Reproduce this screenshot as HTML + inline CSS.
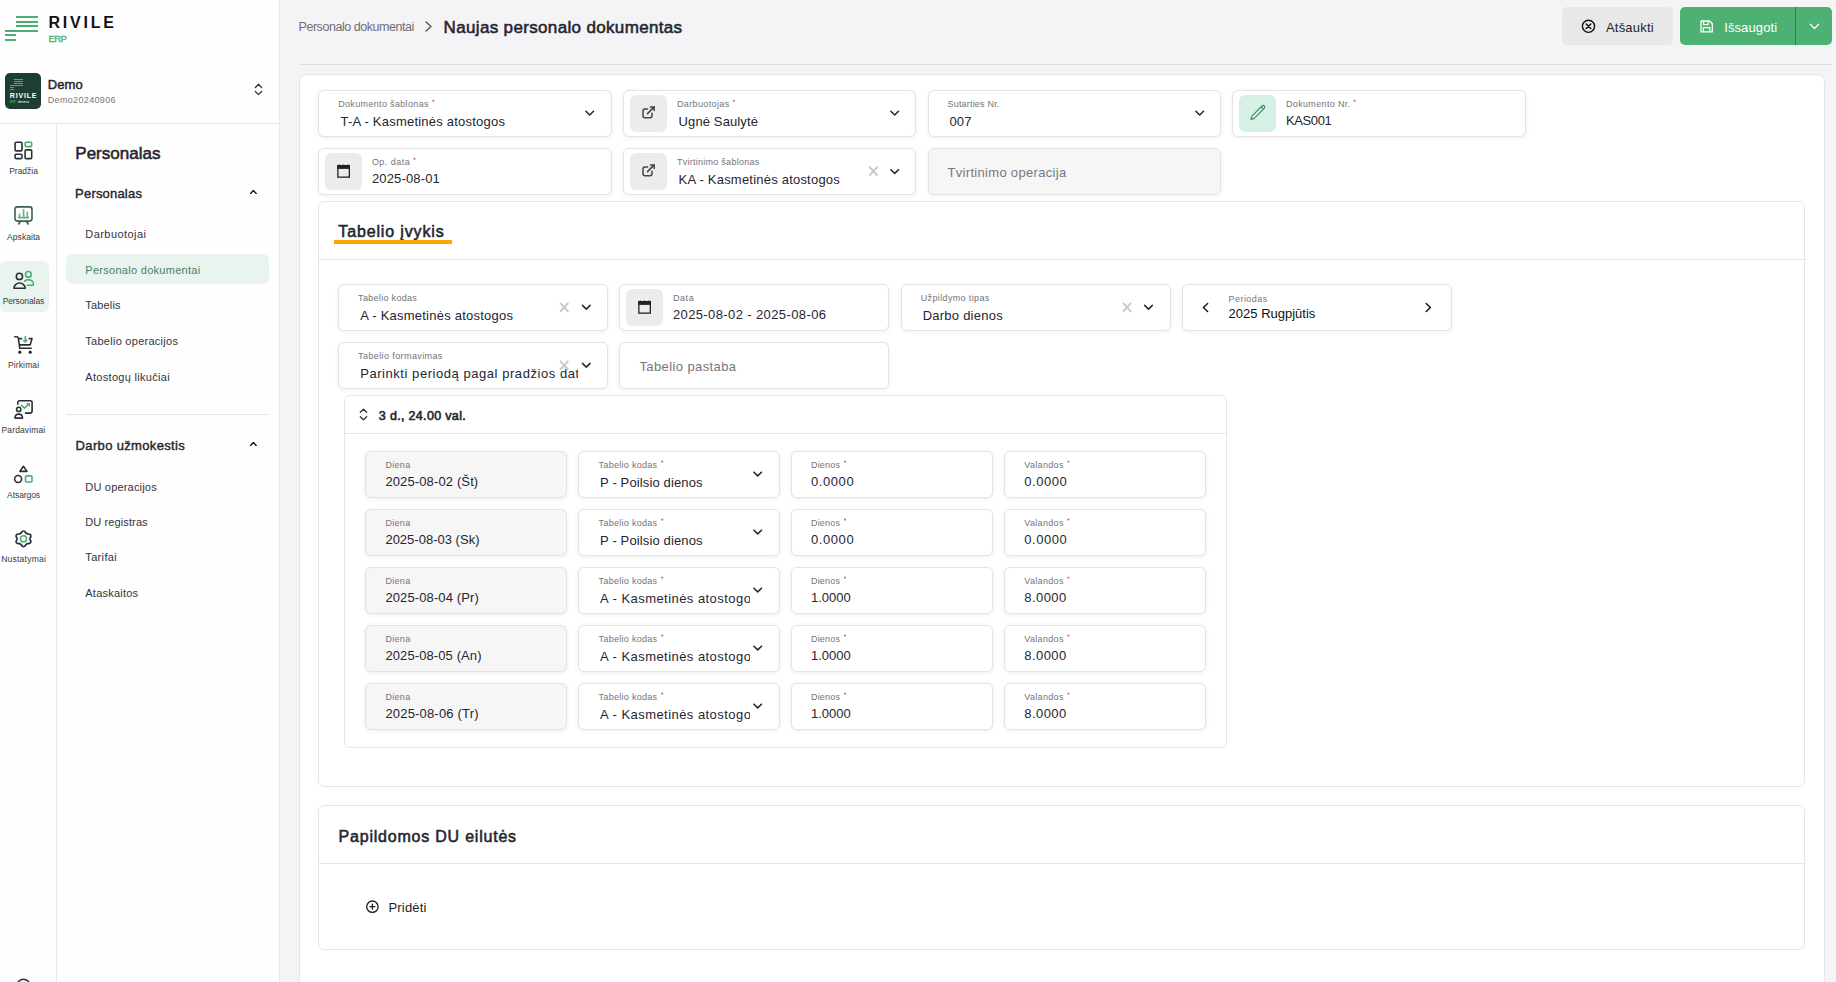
<!DOCTYPE html>
<html><head><meta charset="utf-8"><style>
html,body{margin:0;padding:0;}
body{width:1836px;height:982px;overflow:hidden;position:relative;background:#f4f4f6;font-family:"Liberation Sans",sans-serif;}
.a{position:absolute;}
.t{position:absolute;white-space:nowrap;}
svg.ov{position:absolute;left:0;top:0;width:1836px;height:982px;pointer-events:none;}
</style></head><body>
<div class="a" style="left:0px;top:0px;width:279px;height:982px;background:#fefefe;"></div>
<div class="a" style="left:279px;top:0px;width:1px;height:982px;background:#e8e8ea;"></div>
<div class="a" style="left:0px;top:123px;width:279px;height:1px;background:#e8e8e8;"></div>
<div class="a" style="left:56px;top:124px;width:1px;height:858px;background:#e8e8e8;"></div>
<div class="a" style="left:16px;top:16px;width:22px;height:2.2px;background:#4caf72;"></div>
<div class="a" style="left:16px;top:20.8px;width:22px;height:2.2px;background:#4caf72;"></div>
<div class="a" style="left:16px;top:25.2px;width:22px;height:2.2px;background:#4caf72;"></div>
<div class="a" style="left:5px;top:29.9px;width:33px;height:2.2px;background:#4caf72;"></div>
<div class="a" style="left:5px;top:34.3px;width:11px;height:2.2px;background:#4caf72;"></div>
<div class="a" style="left:5px;top:39px;width:11px;height:2.2px;background:#4caf72;"></div>
<div class="t" style="left:48.40px;top:9.50px;font-size:16px;line-height:26px;height:26px;color:#111;letter-spacing:2.810px;font-weight:700;">RIVILE</div>
<div class="t" style="left:48.60px;top:30.50px;font-size:9.5px;line-height:15px;height:15px;color:#4caf72;letter-spacing:-0.675px;-webkit-text-stroke:0.35px #4caf72;">ERP</div>
<div class="a" style="left:5px;top:73px;width:36px;height:36px;background:#1d3f31;border-radius:5px;"></div>
<div class="a" style="left:14px;top:78.5px;width:9px;height:1px;background:#4caf72;"></div>
<div class="a" style="left:14px;top:80.5px;width:9px;height:1px;background:#4caf72;"></div>
<div class="a" style="left:14px;top:82.5px;width:9px;height:1px;background:#4caf72;"></div>
<div class="a" style="left:10px;top:84.5px;width:13px;height:1px;background:#4caf72;"></div>
<div class="a" style="left:10px;top:86.5px;width:4px;height:1px;background:#4caf72;"></div>
<div class="a" style="left:10px;top:88.5px;width:4px;height:1px;background:#4caf72;"></div>
<div class="t" style="left:9.80px;top:89.50px;font-size:7px;line-height:11px;height:11px;color:#ffffff;letter-spacing:0.830px;font-weight:700;">RIVILE</div>
<div class="t" style="left:9.80px;top:98.50px;font-size:4px;line-height:6px;height:6px;color:#4caf72;letter-spacing:-0.775px;">ERP</div>
<div class="t" style="left:18.00px;top:98.50px;font-size:4px;line-height:6px;height:6px;color:#ffffff;letter-spacing:0.333px;">demo</div>
<div class="t" style="left:47.70px;top:74.00px;font-size:13px;line-height:21px;height:21px;color:#25252f;letter-spacing:0.100px;-webkit-text-stroke:0.45px #25252f;">Demo</div>
<div class="t" style="left:47.70px;top:92.70px;font-size:9px;line-height:14px;height:14px;color:#77777d;letter-spacing:0.350px;">Demo20240906</div>
<div class="a" style="left:0px;top:261px;width:49px;height:51px;background:#eaf4ef;border-radius:6px;"></div>
<div class="t" style="left:9.20px;top:164.00px;font-size:8.5px;line-height:14px;height:14px;color:#3a3a44;letter-spacing:-0.025px;">Pradžia</div>
<div class="t" style="left:7.10px;top:230.00px;font-size:8.5px;line-height:14px;height:14px;color:#3a3a44;letter-spacing:0.057px;">Apskaita</div>
<div class="t" style="left:2.70px;top:294.00px;font-size:8.5px;line-height:14px;height:14px;color:#3a3a44;letter-spacing:-0.106px;">Personalas</div>
<div class="t" style="left:7.90px;top:358.00px;font-size:8.5px;line-height:14px;height:14px;color:#3a3a44;letter-spacing:0.143px;">Pirkimai</div>
<div class="t" style="left:1.50px;top:423.00px;font-size:8.5px;line-height:14px;height:14px;color:#3a3a44;letter-spacing:0.133px;">Pardavimai</div>
<div class="t" style="left:7.10px;top:488.00px;font-size:8.5px;line-height:14px;height:14px;color:#3a3a44;letter-spacing:-0.079px;">Atsargos</div>
<div class="t" style="left:1.20px;top:552.00px;font-size:8.5px;line-height:14px;height:14px;color:#3a3a44;letter-spacing:0.233px;">Nustatymai</div>
<div class="t" style="left:75.30px;top:140.00px;font-size:17px;line-height:27px;height:27px;color:#25252f;letter-spacing:0.017px;-webkit-text-stroke:0.55px #25252f;">Personalas</div>
<div class="t" style="left:75.10px;top:182.50px;font-size:13px;line-height:21px;height:21px;color:#25252f;letter-spacing:0.194px;-webkit-text-stroke:0.4px #25252f;">Personalas</div>
<div class="a" style="left:66px;top:254px;width:203px;height:30px;background:#eaf4ef;border-radius:6px;"></div>
<div class="t" style="left:85.30px;top:224.80px;font-size:11px;line-height:18px;height:18px;color:#33333d;letter-spacing:0.445px;">Darbuotojai</div>
<div class="t" style="left:85.30px;top:261.20px;font-size:11px;line-height:18px;height:18px;color:#4b7d66;letter-spacing:0.287px;">Personalo dokumentai</div>
<div class="t" style="left:85.30px;top:296.00px;font-size:11px;line-height:18px;height:18px;color:#33333d;letter-spacing:0.158px;">Tabelis</div>
<div class="t" style="left:85.30px;top:332.00px;font-size:11px;line-height:18px;height:18px;color:#33333d;letter-spacing:0.268px;">Tabelio operacijos</div>
<div class="t" style="left:85.30px;top:367.80px;font-size:11px;line-height:18px;height:18px;color:#33333d;letter-spacing:0.306px;">Atostogų likučiai</div>
<div class="a" style="left:66px;top:414px;width:203px;height:1px;background:#e6e6e6;"></div>
<div class="t" style="left:75.60px;top:434.50px;font-size:13px;line-height:21px;height:21px;color:#25252f;letter-spacing:0.343px;-webkit-text-stroke:0.4px #25252f;">Darbo užmokestis</div>
<div class="t" style="left:85.30px;top:477.60px;font-size:11px;line-height:18px;height:18px;color:#33333d;letter-spacing:0.192px;">DU operacijos</div>
<div class="t" style="left:85.30px;top:513.00px;font-size:11px;line-height:18px;height:18px;color:#33333d;letter-spacing:0.109px;">DU registras</div>
<div class="t" style="left:85.30px;top:548.20px;font-size:11px;line-height:18px;height:18px;color:#33333d;letter-spacing:0.342px;">Tarifai</div>
<div class="t" style="left:85.30px;top:584.00px;font-size:11px;line-height:18px;height:18px;color:#33333d;letter-spacing:0.228px;">Ataskaitos</div>
<div class="t" style="left:298.50px;top:16.50px;font-size:12.5px;line-height:20px;height:20px;color:#6e6e76;letter-spacing:-0.447px;">Personalo dokumentai</div>
<div class="t" style="left:443.60px;top:14.00px;font-size:17px;line-height:27px;height:27px;color:#25252f;letter-spacing:0.340px;-webkit-text-stroke:0.55px #25252f;">Naujas personalo dokumentas</div>
<div class="a" style="left:299px;top:64px;width:1533px;height:1px;background:#dedee0;"></div>
<div class="a" style="left:1562px;top:7px;width:111px;height:38px;background:#e8e8e9;border-radius:5px;"></div>
<div class="t" style="left:1606.00px;top:17.00px;font-size:13px;line-height:21px;height:21px;color:#1f1f29;letter-spacing:0.193px;">Atšaukti</div>
<div class="a" style="left:1680px;top:7px;width:152px;height:38px;background:#4db174;border-radius:5px;"></div>
<div class="a" style="left:1795px;top:7px;width:1px;height:38px;background:#357a52;"></div>
<div class="t" style="left:1724.20px;top:17.00px;font-size:13px;line-height:21px;height:21px;color:#ffffff;letter-spacing:0.106px;">Išsaugoti</div>
<div class="a" style="left:299px;top:74px;width:1526px;height:940px;background:#ffffff;border:1px solid #e6e6e8;box-sizing:border-box;border-radius:8px;"></div>
<div class="a" style="left:318px;top:90px;width:294px;height:47px;background:#fff;border:1px solid #e3e3e3;box-sizing:border-box;border-radius:6px;box-shadow:0 1px 4px rgba(0,0,0,0.075);"></div>
<div class="t" style="left:338.20px;top:97.10px;font-size:9px;line-height:14px;height:14px;color:#74747a;letter-spacing:0.338px;">Dokumento šablonas</div>
<div class="t" style="left:340.50px;top:111.30px;font-size:13px;line-height:21px;height:21px;color:#25252f;letter-spacing:0.218px;">T-A - Kasmetinės atostogos</div>
<div class="a" style="left:623px;top:90px;width:293px;height:47px;background:#fff;border:1px solid #e3e3e3;box-sizing:border-box;border-radius:6px;box-shadow:0 1px 4px rgba(0,0,0,0.075);"></div>
<div class="a" style="left:630px;top:95px;width:37px;height:37px;background:#ececec;border-radius:6px;"></div>
<div class="t" style="left:676.90px;top:97.10px;font-size:9px;line-height:14px;height:14px;color:#74747a;letter-spacing:0.375px;">Darbuotojas</div>
<div class="t" style="left:678.60px;top:111.30px;font-size:13px;line-height:21px;height:21px;color:#25252f;letter-spacing:0.114px;">Ugnė Saulytė</div>
<div class="a" style="left:928px;top:90px;width:293px;height:47px;background:#fff;border:1px solid #e3e3e3;box-sizing:border-box;border-radius:6px;box-shadow:0 1px 4px rgba(0,0,0,0.075);"></div>
<div class="t" style="left:947.50px;top:97.10px;font-size:9px;line-height:14px;height:14px;color:#74747a;letter-spacing:0.192px;">Sutarties Nr.</div>
<div class="t" style="left:949.60px;top:111.30px;font-size:13px;line-height:21px;height:21px;color:#25252f;letter-spacing:0.050px;">007</div>
<div class="a" style="left:1232px;top:90px;width:294px;height:47px;background:#fff;border:1px solid #e3e3e3;box-sizing:border-box;border-radius:6px;box-shadow:0 1px 4px rgba(0,0,0,0.075);"></div>
<div class="a" style="left:1239px;top:95px;width:37px;height:37px;background:#d7f0e5;border-radius:6px;"></div>
<div class="t" style="left:1286.00px;top:97.10px;font-size:9px;line-height:14px;height:14px;color:#74747a;letter-spacing:0.337px;">Dokumento Nr.</div>
<div class="t" style="left:1286.00px;top:110.30px;font-size:13px;line-height:21px;height:21px;color:#25252f;letter-spacing:-0.400px;">KAS001</div>
<div class="a" style="left:318px;top:148px;width:294px;height:47px;background:#fff;border:1px solid #e3e3e3;box-sizing:border-box;border-radius:6px;box-shadow:0 1px 4px rgba(0,0,0,0.075);"></div>
<div class="a" style="left:325px;top:153px;width:37px;height:37px;background:#ececec;border-radius:6px;"></div>
<div class="t" style="left:371.90px;top:155.20px;font-size:9px;line-height:14px;height:14px;color:#74747a;letter-spacing:0.464px;">Op. data</div>
<div class="t" style="left:371.90px;top:168.00px;font-size:13px;line-height:21px;height:21px;color:#25252f;letter-spacing:0.156px;">2025-08-01</div>
<div class="a" style="left:623px;top:148px;width:293px;height:47px;background:#fff;border:1px solid #e3e3e3;box-sizing:border-box;border-radius:6px;box-shadow:0 1px 4px rgba(0,0,0,0.075);"></div>
<div class="a" style="left:630px;top:153px;width:37px;height:37px;background:#ececec;border-radius:6px;"></div>
<div class="t" style="left:676.90px;top:155.20px;font-size:9px;line-height:14px;height:14px;color:#74747a;letter-spacing:0.269px;">Tvirtinimo šablonas</div>
<div class="t" style="left:678.60px;top:169.30px;font-size:13px;line-height:21px;height:21px;color:#25252f;letter-spacing:0.212px;">KA - Kasmetinės atostogos</div>
<div class="a" style="left:928px;top:148px;width:293px;height:47px;background:#f6f6f6;border:1px solid #e3e3e3;box-sizing:border-box;border-radius:6px;box-shadow:0 1px 4px rgba(0,0,0,0.075);"></div>
<div class="t" style="left:947.50px;top:162.00px;font-size:13px;line-height:21px;height:21px;color:#76767c;letter-spacing:0.311px;">Tvirtinimo operacija</div>
<div class="a" style="left:318px;top:201px;width:1487px;height:586px;background:#fff;border:1px solid #e6e6e8;box-sizing:border-box;border-radius:6px;"></div>
<div class="a" style="left:318px;top:259px;width:1487px;height:1px;background:#e6e6e8;"></div>
<div class="t" style="left:338.30px;top:218.50px;font-size:16px;line-height:26px;height:26px;color:#25252f;letter-spacing:0.858px;-webkit-text-stroke:0.55px #25252f;">Tabelio įvykis</div>
<div class="a" style="left:333.5px;top:240px;width:118.5px;height:4px;background:#ffa502;"></div>
<div class="a" style="left:338px;top:284px;width:270px;height:47px;background:#fff;border:1px solid #e3e3e3;box-sizing:border-box;border-radius:6px;box-shadow:0 1px 4px rgba(0,0,0,0.075);"></div>
<div class="t" style="left:358.10px;top:290.90px;font-size:9px;line-height:14px;height:14px;color:#74747a;letter-spacing:0.312px;">Tabelio kodas</div>
<div class="t" style="left:360.20px;top:305.20px;font-size:13px;line-height:21px;height:21px;color:#25252f;letter-spacing:0.235px;">A - Kasmetinės atostogos</div>
<div class="a" style="left:619px;top:284px;width:270px;height:47px;background:#fff;border:1px solid #e3e3e3;box-sizing:border-box;border-radius:6px;box-shadow:0 1px 4px rgba(0,0,0,0.075);"></div>
<div class="a" style="left:626px;top:289px;width:37px;height:37px;background:#ececec;border-radius:6px;"></div>
<div class="t" style="left:672.90px;top:291.20px;font-size:9px;line-height:14px;height:14px;color:#74747a;letter-spacing:0.583px;">Data</div>
<div class="t" style="left:672.90px;top:303.80px;font-size:13px;line-height:21px;height:21px;color:#25252f;letter-spacing:0.389px;">2025-08-02 - 2025-08-06</div>
<div class="a" style="left:901px;top:284px;width:270px;height:47px;background:#fff;border:1px solid #e3e3e3;box-sizing:border-box;border-radius:6px;box-shadow:0 1px 4px rgba(0,0,0,0.075);"></div>
<div class="t" style="left:920.70px;top:290.90px;font-size:9px;line-height:14px;height:14px;color:#74747a;letter-spacing:0.364px;">Užpildymo tipas</div>
<div class="t" style="left:922.70px;top:305.20px;font-size:13px;line-height:21px;height:21px;color:#25252f;letter-spacing:0.241px;">Darbo dienos</div>
<div class="a" style="left:1182px;top:284px;width:270px;height:47px;background:#fff;border:1px solid #e3e3e3;box-sizing:border-box;border-radius:6px;box-shadow:0 1px 4px rgba(0,0,0,0.075);"></div>
<div class="t" style="left:1228.50px;top:292.20px;font-size:9px;line-height:14px;height:14px;color:#74747a;letter-spacing:0.457px;">Periodas</div>
<div class="t" style="left:1228.60px;top:303.00px;font-size:13px;line-height:21px;height:21px;color:#111;letter-spacing:0.000px;">2025 Rugpjūtis</div>
<div class="a" style="left:338px;top:342px;width:270px;height:47px;background:#fff;border:1px solid #e3e3e3;box-sizing:border-box;border-radius:6px;box-shadow:0 1px 4px rgba(0,0,0,0.075);"></div>
<div class="t" style="left:358.10px;top:348.90px;font-size:9px;line-height:14px;height:14px;color:#74747a;letter-spacing:0.397px;">Tabelio formavimas</div>
<div class="t" style="left:360.20px;top:362.70px;font-size:13px;line-height:21px;height:21px;color:#25252f;letter-spacing:0.550px;width:217.80px;overflow:hidden;">Parinkti periodą pagal pradžios datą</div>
<div class="a" style="left:619px;top:342px;width:270px;height:47px;background:#fff;border:1px solid #e3e3e3;box-sizing:border-box;border-radius:6px;box-shadow:0 1px 4px rgba(0,0,0,0.075);"></div>
<div class="t" style="left:639.40px;top:356.10px;font-size:13px;line-height:21px;height:21px;color:#76767c;letter-spacing:0.400px;">Tabelio pastaba</div>
<div class="a" style="left:344px;top:395px;width:883px;height:353px;background:#fff;border:1px solid #e6e6e8;box-sizing:border-box;border-radius:6px;"></div>
<div class="a" style="left:344px;top:433px;width:883px;height:1px;background:#e6e6e8;"></div>
<div class="t" style="left:378.80px;top:406.00px;font-size:12.5px;line-height:20px;height:20px;color:#25252f;letter-spacing:0.327px;-webkit-text-stroke:0.6px #25252f;">3 d., 24.00 val.</div>
<div class="a" style="left:365px;top:451px;width:202px;height:47px;background:#f6f6f6;border:1px solid #e3e3e3;box-sizing:border-box;border-radius:6px;box-shadow:0 1px 4px rgba(0,0,0,0.075);"></div>
<div class="t" style="left:385.40px;top:458.20px;font-size:9px;line-height:14px;height:14px;color:#74747a;letter-spacing:0.313px;">Diena</div>
<div class="t" style="left:385.40px;top:471.20px;font-size:13px;line-height:21px;height:21px;color:#25252f;letter-spacing:0.125px;">2025-08-02 (Št)</div>
<div class="a" style="left:578px;top:451px;width:202px;height:47px;background:#fff;border:1px solid #e3e3e3;box-sizing:border-box;border-radius:6px;box-shadow:0 1px 4px rgba(0,0,0,0.075);"></div>
<div class="t" style="left:598.60px;top:458.20px;font-size:9px;line-height:14px;height:14px;color:#74747a;letter-spacing:0.288px;">Tabelio kodas</div>
<div class="t" style="left:600.10px;top:471.70px;font-size:13px;line-height:21px;height:21px;color:#25252f;letter-spacing:0.129px;">P - Poilsio dienos</div>
<div class="a" style="left:791px;top:451px;width:202px;height:47px;background:#fff;border:1px solid #e3e3e3;box-sizing:border-box;border-radius:6px;box-shadow:0 1px 4px rgba(0,0,0,0.075);"></div>
<div class="t" style="left:811.00px;top:458.20px;font-size:9px;line-height:14px;height:14px;color:#74747a;letter-spacing:0.180px;">Dienos</div>
<div class="t" style="left:811.00px;top:471.20px;font-size:13px;line-height:21px;height:21px;color:#25252f;letter-spacing:0.570px;">0.0000</div>
<div class="a" style="left:1004px;top:451px;width:202px;height:47px;background:#fff;border:1px solid #e3e3e3;box-sizing:border-box;border-radius:6px;box-shadow:0 1px 4px rgba(0,0,0,0.075);"></div>
<div class="t" style="left:1024.30px;top:458.20px;font-size:9px;line-height:14px;height:14px;color:#74747a;letter-spacing:0.321px;">Valandos</div>
<div class="t" style="left:1024.30px;top:471.20px;font-size:13px;line-height:21px;height:21px;color:#25252f;letter-spacing:0.530px;">0.0000</div>
<div class="a" style="left:365px;top:509px;width:202px;height:47px;background:#f6f6f6;border:1px solid #e3e3e3;box-sizing:border-box;border-radius:6px;box-shadow:0 1px 4px rgba(0,0,0,0.075);"></div>
<div class="t" style="left:385.40px;top:516.20px;font-size:9px;line-height:14px;height:14px;color:#74747a;letter-spacing:0.313px;">Diena</div>
<div class="t" style="left:385.40px;top:529.20px;font-size:13px;line-height:21px;height:21px;color:#25252f;letter-spacing:0.011px;">2025-08-03 (Sk)</div>
<div class="a" style="left:578px;top:509px;width:202px;height:47px;background:#fff;border:1px solid #e3e3e3;box-sizing:border-box;border-radius:6px;box-shadow:0 1px 4px rgba(0,0,0,0.075);"></div>
<div class="t" style="left:598.60px;top:516.20px;font-size:9px;line-height:14px;height:14px;color:#74747a;letter-spacing:0.288px;">Tabelio kodas</div>
<div class="t" style="left:600.10px;top:529.70px;font-size:13px;line-height:21px;height:21px;color:#25252f;letter-spacing:0.129px;">P - Poilsio dienos</div>
<div class="a" style="left:791px;top:509px;width:202px;height:47px;background:#fff;border:1px solid #e3e3e3;box-sizing:border-box;border-radius:6px;box-shadow:0 1px 4px rgba(0,0,0,0.075);"></div>
<div class="t" style="left:811.00px;top:516.20px;font-size:9px;line-height:14px;height:14px;color:#74747a;letter-spacing:0.180px;">Dienos</div>
<div class="t" style="left:811.00px;top:529.20px;font-size:13px;line-height:21px;height:21px;color:#25252f;letter-spacing:0.570px;">0.0000</div>
<div class="a" style="left:1004px;top:509px;width:202px;height:47px;background:#fff;border:1px solid #e3e3e3;box-sizing:border-box;border-radius:6px;box-shadow:0 1px 4px rgba(0,0,0,0.075);"></div>
<div class="t" style="left:1024.30px;top:516.20px;font-size:9px;line-height:14px;height:14px;color:#74747a;letter-spacing:0.321px;">Valandos</div>
<div class="t" style="left:1024.30px;top:529.20px;font-size:13px;line-height:21px;height:21px;color:#25252f;letter-spacing:0.530px;">0.0000</div>
<div class="a" style="left:365px;top:567px;width:202px;height:47px;background:#f6f6f6;border:1px solid #e3e3e3;box-sizing:border-box;border-radius:6px;box-shadow:0 1px 4px rgba(0,0,0,0.075);"></div>
<div class="t" style="left:385.40px;top:574.20px;font-size:9px;line-height:14px;height:14px;color:#74747a;letter-spacing:0.313px;">Diena</div>
<div class="t" style="left:385.40px;top:587.20px;font-size:13px;line-height:21px;height:21px;color:#25252f;letter-spacing:0.118px;">2025-08-04 (Pr)</div>
<div class="a" style="left:578px;top:567px;width:202px;height:47px;background:#fff;border:1px solid #e3e3e3;box-sizing:border-box;border-radius:6px;box-shadow:0 1px 4px rgba(0,0,0,0.075);"></div>
<div class="t" style="left:598.60px;top:574.20px;font-size:9px;line-height:14px;height:14px;color:#74747a;letter-spacing:0.288px;">Tabelio kodas</div>
<div class="t" style="left:600.10px;top:587.70px;font-size:13px;line-height:21px;height:21px;color:#25252f;letter-spacing:0.450px;width:149.90px;overflow:hidden;">A - Kasmetinės atostogos</div>
<div class="a" style="left:791px;top:567px;width:202px;height:47px;background:#fff;border:1px solid #e3e3e3;box-sizing:border-box;border-radius:6px;box-shadow:0 1px 4px rgba(0,0,0,0.075);"></div>
<div class="t" style="left:811.00px;top:574.20px;font-size:9px;line-height:14px;height:14px;color:#74747a;letter-spacing:0.180px;">Dienos</div>
<div class="t" style="left:811.00px;top:587.20px;font-size:13px;line-height:21px;height:21px;color:#25252f;letter-spacing:-0.030px;">1.0000</div>
<div class="a" style="left:1004px;top:567px;width:202px;height:47px;background:#fff;border:1px solid #e3e3e3;box-sizing:border-box;border-radius:6px;box-shadow:0 1px 4px rgba(0,0,0,0.075);"></div>
<div class="t" style="left:1024.30px;top:574.20px;font-size:9px;line-height:14px;height:14px;color:#74747a;letter-spacing:0.321px;">Valandos</div>
<div class="t" style="left:1024.30px;top:587.20px;font-size:13px;line-height:21px;height:21px;color:#25252f;letter-spacing:0.430px;">8.0000</div>
<div class="a" style="left:365px;top:625px;width:202px;height:47px;background:#f6f6f6;border:1px solid #e3e3e3;box-sizing:border-box;border-radius:6px;box-shadow:0 1px 4px rgba(0,0,0,0.075);"></div>
<div class="t" style="left:385.40px;top:632.20px;font-size:9px;line-height:14px;height:14px;color:#74747a;letter-spacing:0.313px;">Diena</div>
<div class="t" style="left:385.40px;top:645.20px;font-size:13px;line-height:21px;height:21px;color:#25252f;letter-spacing:0.104px;">2025-08-05 (An)</div>
<div class="a" style="left:578px;top:625px;width:202px;height:47px;background:#fff;border:1px solid #e3e3e3;box-sizing:border-box;border-radius:6px;box-shadow:0 1px 4px rgba(0,0,0,0.075);"></div>
<div class="t" style="left:598.60px;top:632.20px;font-size:9px;line-height:14px;height:14px;color:#74747a;letter-spacing:0.288px;">Tabelio kodas</div>
<div class="t" style="left:600.10px;top:645.70px;font-size:13px;line-height:21px;height:21px;color:#25252f;letter-spacing:0.450px;width:149.90px;overflow:hidden;">A - Kasmetinės atostogos</div>
<div class="a" style="left:791px;top:625px;width:202px;height:47px;background:#fff;border:1px solid #e3e3e3;box-sizing:border-box;border-radius:6px;box-shadow:0 1px 4px rgba(0,0,0,0.075);"></div>
<div class="t" style="left:811.00px;top:632.20px;font-size:9px;line-height:14px;height:14px;color:#74747a;letter-spacing:0.180px;">Dienos</div>
<div class="t" style="left:811.00px;top:645.20px;font-size:13px;line-height:21px;height:21px;color:#25252f;letter-spacing:-0.030px;">1.0000</div>
<div class="a" style="left:1004px;top:625px;width:202px;height:47px;background:#fff;border:1px solid #e3e3e3;box-sizing:border-box;border-radius:6px;box-shadow:0 1px 4px rgba(0,0,0,0.075);"></div>
<div class="t" style="left:1024.30px;top:632.20px;font-size:9px;line-height:14px;height:14px;color:#74747a;letter-spacing:0.321px;">Valandos</div>
<div class="t" style="left:1024.30px;top:645.20px;font-size:13px;line-height:21px;height:21px;color:#25252f;letter-spacing:0.430px;">8.0000</div>
<div class="a" style="left:365px;top:683px;width:202px;height:47px;background:#f6f6f6;border:1px solid #e3e3e3;box-sizing:border-box;border-radius:6px;box-shadow:0 1px 4px rgba(0,0,0,0.075);"></div>
<div class="t" style="left:385.40px;top:690.20px;font-size:9px;line-height:14px;height:14px;color:#74747a;letter-spacing:0.313px;">Diena</div>
<div class="t" style="left:385.40px;top:703.20px;font-size:13px;line-height:21px;height:21px;color:#25252f;letter-spacing:0.182px;">2025-08-06 (Tr)</div>
<div class="a" style="left:578px;top:683px;width:202px;height:47px;background:#fff;border:1px solid #e3e3e3;box-sizing:border-box;border-radius:6px;box-shadow:0 1px 4px rgba(0,0,0,0.075);"></div>
<div class="t" style="left:598.60px;top:690.20px;font-size:9px;line-height:14px;height:14px;color:#74747a;letter-spacing:0.288px;">Tabelio kodas</div>
<div class="t" style="left:600.10px;top:703.70px;font-size:13px;line-height:21px;height:21px;color:#25252f;letter-spacing:0.450px;width:149.90px;overflow:hidden;">A - Kasmetinės atostogos</div>
<div class="a" style="left:791px;top:683px;width:202px;height:47px;background:#fff;border:1px solid #e3e3e3;box-sizing:border-box;border-radius:6px;box-shadow:0 1px 4px rgba(0,0,0,0.075);"></div>
<div class="t" style="left:811.00px;top:690.20px;font-size:9px;line-height:14px;height:14px;color:#74747a;letter-spacing:0.180px;">Dienos</div>
<div class="t" style="left:811.00px;top:703.20px;font-size:13px;line-height:21px;height:21px;color:#25252f;letter-spacing:-0.030px;">1.0000</div>
<div class="a" style="left:1004px;top:683px;width:202px;height:47px;background:#fff;border:1px solid #e3e3e3;box-sizing:border-box;border-radius:6px;box-shadow:0 1px 4px rgba(0,0,0,0.075);"></div>
<div class="t" style="left:1024.30px;top:690.20px;font-size:9px;line-height:14px;height:14px;color:#74747a;letter-spacing:0.321px;">Valandos</div>
<div class="t" style="left:1024.30px;top:703.20px;font-size:13px;line-height:21px;height:21px;color:#25252f;letter-spacing:0.430px;">8.0000</div>
<div class="a" style="left:318px;top:805px;width:1487px;height:145px;background:#fff;border:1px solid #e6e6e8;box-sizing:border-box;border-radius:6px;"></div>
<div class="a" style="left:318px;top:863px;width:1487px;height:1px;background:#e6e6e8;"></div>
<div class="t" style="left:338.60px;top:823.50px;font-size:16px;line-height:26px;height:26px;color:#25252f;letter-spacing:0.783px;-webkit-text-stroke:0.55px #25252f;">Papildomos DU eilutės</div>
<div class="t" style="left:388.40px;top:897.20px;font-size:13px;line-height:21px;height:21px;color:#1c1c22;letter-spacing:0.208px;">Pridėti</div>
<svg class="ov" width="1836" height="982" viewBox="0 0 1836 982">
<path d="M255.4 87.5 L258.5 84.3 L261.6 87.5 M255.4 91.5 L258.5 94.6 L261.6 91.5" fill="none" stroke="#333" stroke-width="1.3" stroke-linecap="round" stroke-linejoin="round"/>
<g stroke-width="1.6" fill="none" stroke-linecap="round" stroke-linejoin="round" stroke="#2b2e38"><rect x="15.1" y="142.2" width="6.9" height="8.7" rx="1.1"/><rect x="15.1" y="154.2" width="6.9" height="4.4" rx="1"/><rect x="25.1" y="149.9" width="6.6" height="8.7" rx="1.1"/></g>
<rect x="25.1" y="142.2" width="6.6" height="4.4" rx="1" stroke-width="1.6" fill="none" stroke-linecap="round" stroke-linejoin="round" stroke="#4caf72"/>
<g stroke-width="1.6" fill="none" stroke-linecap="round" stroke-linejoin="round" stroke="#3d5f51" stroke-width="1.8"><rect x="15" y="206.9" width="17" height="14.2" rx="2.5"/><path d="M20.3 221.5 L18.7 224 M26.5 221.5 L28.2 224"/></g>
<g fill="none" stroke="#5bb783" stroke-width="1.6" stroke-linecap="round"><path d="M19.5 214.3 V217.5 M23.6 209.8 V217.5 M27.3 212.3 V217.5 M18.6 217.6 H28.6"/></g>
<g stroke-width="1.6" fill="none" stroke-linecap="round" stroke-linejoin="round" stroke="#2b2e38"><circle cx="19.4" cy="276.4" r="3.1"/><path d="M13.9 288.3 A5.65 5.3 0 0 1 25.2 288.3 Z"/></g>
<g stroke-width="1.6" fill="none" stroke-linecap="round" stroke-linejoin="round" stroke="#4caf72"><circle cx="28.4" cy="274.4" r="2.9"/><path d="M24.6 281.2 A5 4 0 0 1 33.1 285.2 H27.2"/></g>
<g stroke-width="1.6" fill="none" stroke-linecap="round" stroke-linejoin="round" stroke="#2b2e38"><path d="M14.8 336.8 H17 Q18 336.8 18.3 338.2 L19.8 348.3 H31.2 M18.4 338.6 H21.6 M29.2 338.6 H32 L30.2 344.9 H19.2"/></g>
<g fill="#2b2e38"><circle cx="19.8" cy="352.2" r="1.6"/><circle cx="30.2" cy="352.2" r="1.6"/></g>
<g stroke="#4caf72" stroke-width="1.6" stroke-linecap="round" fill="#4caf72"><path d="M25.4 336.5 V340" fill="none"/><path d="M23.3 340.2 H27.5 L25.4 342.4 Z" stroke-width="1"/></g>
<g stroke-width="1.6" fill="none" stroke-linecap="round" stroke-linejoin="round" stroke="#2b2e38"><path d="M17.8 404.3 V402.8 Q17.8 400.8 19.8 400.8 H30.1 Q32.1 400.8 32.1 402.8 V411.1 Q32.1 413.1 30.1 413.1 H25.5"/><circle cx="18.7" cy="409.4" r="2.1"/><path d="M15 418.1 Q15 414.1 18.7 414.1 Q22.5 414.1 22.5 418.1 Z"/></g>
<g stroke-width="1.6" fill="none" stroke-linecap="round" stroke-linejoin="round" stroke="#4caf72"><path d="M21.4 405.4 L24.4 408.1 L28.8 404.1"/></g><path d="M26 403 H30 V407 Z" fill="#4caf72"/>
<g stroke-width="1.6" fill="none" stroke-linecap="round" stroke-linejoin="round" stroke="#2b2e38"><path d="M23.4 466.3 L27 471.4 H19.9 Z"/><circle cx="18.1" cy="479" r="3.5"/></g>
<rect x="25.5" y="475.9" width="6.5" height="6.1" rx="1" stroke-width="1.6" fill="none" stroke-linecap="round" stroke-linejoin="round" stroke="#4caf72"/>
<path d="M24.70 531.37 Q26.20 534.48 29.80 534.23 Q31.00 534.90 31.00 536.15 Q28.90 538.80 31.00 541.45 Q31.00 542.70 29.80 543.39 Q26.20 543.16 24.70 546.31 Q23.50 547.00 22.30 546.31 Q20.80 543.16 17.20 543.39 Q16.00 542.70 16.00 541.45 Q18.10 538.80 16.00 536.15 Q16.00 534.90 17.20 534.23 Q20.80 534.48 22.30 531.37 Q23.50 530.70 24.70 531.37 Z" stroke-width="1.6" fill="none" stroke-linecap="round" stroke-linejoin="round" stroke="#2b2e38"/>
<circle cx="23.5" cy="538.8" r="3.1" stroke-width="1.6" fill="none" stroke-linecap="round" stroke-linejoin="round" stroke="#4caf72" stroke-width="1.7"/>
<circle cx="23.5" cy="985.5" r="6.3" stroke-width="1.6" fill="none" stroke-linecap="round" stroke-linejoin="round" stroke="#2b2e38"/>
<path d="M250.6 193.4 L253.4 190.6 L256.2 193.4" fill="none" stroke="#111" stroke-width="1.35" stroke-linecap="round" stroke-linejoin="round"/>
<path d="M250.6 445.4 L253.4 442.6 L256.2 445.4" fill="none" stroke="#111" stroke-width="1.35" stroke-linecap="round" stroke-linejoin="round"/>
<path d="M426 22 L431 26.5 L426 31" fill="none" stroke="#555" stroke-width="1.4" stroke-linecap="round" stroke-linejoin="round"/>
<circle cx="1588.5" cy="26.3" r="6.1" fill="none" stroke="#111" stroke-width="1.4"/><path d="M1586.2 24 L1590.8 28.6 M1590.8 24 L1586.2 28.6" stroke="#111" stroke-width="1.4" stroke-linecap="round"/>
<g fill="none" stroke="#ffffff" stroke-width="1.3" stroke-linejoin="round"><path d="M1701 21 H1709.5 L1712.3 23.8 V31.9 H1701 Z"/><path d="M1703.6 21 V24.6 H1708.2 V21"/><path d="M1703.4 31.9 V27.6 H1709.8 V31.9"/></g>
<path d="M1810.3 24.3 L1814.5 28.5 L1818.7 24.3" fill="none" stroke="#fff" stroke-width="1.3" stroke-linecap="round" stroke-linejoin="round"/>
<circle cx="433.3" cy="100.8" r="1.15" fill="#e0679a"/>
<path d="M585.9 111.3 L589.7 115.0 L593.5 111.3" fill="none" stroke="#2a2b31" stroke-width="1.6" stroke-linecap="round" stroke-linejoin="round"/>
<g transform="translate(0,0)" fill="none" stroke="#444" stroke-width="1.5" stroke-linecap="round" stroke-linejoin="round"><path d="M647.6 109 H645 Q643 109 643 111 V115.8 Q643 117.8 645 117.8 H650 Q652 117.8 652 115.8 V113.3"/><path d="M647.5 113.6 L654.2 106.9 M650.5 106.9 H654.2 V110.5"/></g>
<circle cx="733.8" cy="100.8" r="1.15" fill="#e0679a"/>
<path d="M890.9 111.3 L894.7 115.0 L898.5 111.3" fill="none" stroke="#2a2b31" stroke-width="1.6" stroke-linecap="round" stroke-linejoin="round"/>
<path d="M1195.9 111.3 L1199.7 115.0 L1203.5 111.3" fill="none" stroke="#2a2b31" stroke-width="1.6" stroke-linecap="round" stroke-linejoin="round"/>
<g fill="none" stroke="#3f9166" stroke-width="1.2" stroke-linejoin="round"><path d="M1251 119.6 L1251.9 116.1 L1262 106 Q1263.2 104.9 1264.3 106 Q1265.4 107.1 1264.3 108.3 L1254.2 118.4 Z"/><path d="M1261.2 106.9 L1263.4 109.1"/></g>
<circle cx="1354.6" cy="100.8" r="1.15" fill="#e0679a"/>
<g fill="#222"><rect x="337.2" y="165" width="12.8" height="3.9"/><circle cx="339.2" cy="165.5" r="1.1"/><circle cx="343.59999999999997" cy="165.5" r="1.1"/><circle cx="348.0" cy="165.5" r="1.1"/></g><rect x="337.84999999999997" y="166" width="11.5" height="11.15" fill="none" stroke="#222" stroke-width="1.3"/>
<circle cx="414.5" cy="158.8" r="1.15" fill="#e0679a"/>
<g transform="translate(0,58)" fill="none" stroke="#444" stroke-width="1.5" stroke-linecap="round" stroke-linejoin="round"><path d="M647.6 109 H645 Q643 109 643 111 V115.8 Q643 117.8 645 117.8 H650 Q652 117.8 652 115.8 V113.3"/><path d="M647.5 113.6 L654.2 106.9 M650.5 106.9 H654.2 V110.5"/></g>
<path d="M869.8 167.3 L877.0 175.1 M877.0 167.3 L869.8 175.1" fill="none" stroke="#c5ccd2" stroke-width="2" stroke-linecap="round"/>
<path d="M890.9 169.7 L894.7 173.4 L898.5 169.7" fill="none" stroke="#2a2b31" stroke-width="1.6" stroke-linecap="round" stroke-linejoin="round"/>
<path d="M560.6 303.4 L567.8 311.2 M567.8 303.4 L560.6 311.2" fill="none" stroke="#c5ccd2" stroke-width="2" stroke-linecap="round"/>
<path d="M582.5 305.4 L586.3 309.1 L590.1 305.4" fill="none" stroke="#2a2b31" stroke-width="1.6" stroke-linecap="round" stroke-linejoin="round"/>
<g fill="#222"><rect x="638.2" y="301" width="12.8" height="3.9"/><circle cx="640.2" cy="301.5" r="1.1"/><circle cx="644.6" cy="301.5" r="1.1"/><circle cx="649.0" cy="301.5" r="1.1"/></g><rect x="638.85" y="302" width="11.5" height="11.15" fill="none" stroke="#222" stroke-width="1.3"/>
<path d="M1123.4 303.4 L1130.6 311.2 M1130.6 303.4 L1123.4 311.2" fill="none" stroke="#c5ccd2" stroke-width="2" stroke-linecap="round"/>
<path d="M1144.7 305.4 L1148.5 309.1 L1152.3 305.4" fill="none" stroke="#2a2b31" stroke-width="1.6" stroke-linecap="round" stroke-linejoin="round"/>
<path d="M1207.6 303.4 L1203.4 307.5 L1207.6 311.6 M1426.2 303.4 L1430.4 307.5 L1426.2 311.6" fill="none" stroke="#111" stroke-width="1.4" stroke-linecap="round" stroke-linejoin="round"/>
<path d="M560.6 361.4 L567.8 369.2 M567.8 361.4 L560.6 369.2" fill="none" stroke="#c5ccd2" stroke-width="2" stroke-linecap="round"/>
<path d="M582.5 363.4 L586.3 367.1 L590.1 363.4" fill="none" stroke="#2a2b31" stroke-width="1.6" stroke-linecap="round" stroke-linejoin="round"/>
<path d="M360.3 412.2 L363.5 409.2 L366.7 412.2 M360.3 416.8 L363.5 419.8 L366.7 416.8" fill="none" stroke="#333" stroke-width="1.3" stroke-linecap="round" stroke-linejoin="round"/>
<circle cx="662.2" cy="461.6" r="1.15" fill="#e0679a"/>
<path d="M753.9 472.2 L757.7 475.9 L761.5 472.2" fill="none" stroke="#2a2b31" stroke-width="1.6" stroke-linecap="round" stroke-linejoin="round"/>
<circle cx="845" cy="461.6" r="1.15" fill="#e0679a"/>
<circle cx="1068.4" cy="461.6" r="1.15" fill="#e0679a"/>
<circle cx="662.2" cy="519.6" r="1.15" fill="#e0679a"/>
<path d="M753.9 530.2 L757.7 533.9 L761.5 530.2" fill="none" stroke="#2a2b31" stroke-width="1.6" stroke-linecap="round" stroke-linejoin="round"/>
<circle cx="845" cy="519.6" r="1.15" fill="#e0679a"/>
<circle cx="1068.4" cy="519.6" r="1.15" fill="#e0679a"/>
<circle cx="662.2" cy="577.6" r="1.15" fill="#e0679a"/>
<path d="M753.9 588.2 L757.7 591.9 L761.5 588.2" fill="none" stroke="#2a2b31" stroke-width="1.6" stroke-linecap="round" stroke-linejoin="round"/>
<circle cx="845" cy="577.6" r="1.15" fill="#e0679a"/>
<circle cx="1068.4" cy="577.6" r="1.15" fill="#e0679a"/>
<circle cx="662.2" cy="635.6" r="1.15" fill="#e0679a"/>
<path d="M753.9 646.2 L757.7 649.9 L761.5 646.2" fill="none" stroke="#2a2b31" stroke-width="1.6" stroke-linecap="round" stroke-linejoin="round"/>
<circle cx="845" cy="635.6" r="1.15" fill="#e0679a"/>
<circle cx="1068.4" cy="635.6" r="1.15" fill="#e0679a"/>
<circle cx="662.2" cy="693.6" r="1.15" fill="#e0679a"/>
<path d="M753.9 704.2 L757.7 707.9 L761.5 704.2" fill="none" stroke="#2a2b31" stroke-width="1.6" stroke-linecap="round" stroke-linejoin="round"/>
<circle cx="845" cy="693.6" r="1.15" fill="#e0679a"/>
<circle cx="1068.4" cy="693.6" r="1.15" fill="#e0679a"/>
<circle cx="372.4" cy="906.7" r="5.7" fill="none" stroke="#1c1c22" stroke-width="1.3"/><path d="M372.4 904.2 V909.2 M369.9 906.7 H374.9" stroke="#1c1c22" stroke-width="1.3" stroke-linecap="round"/>
</svg>
</body></html>
